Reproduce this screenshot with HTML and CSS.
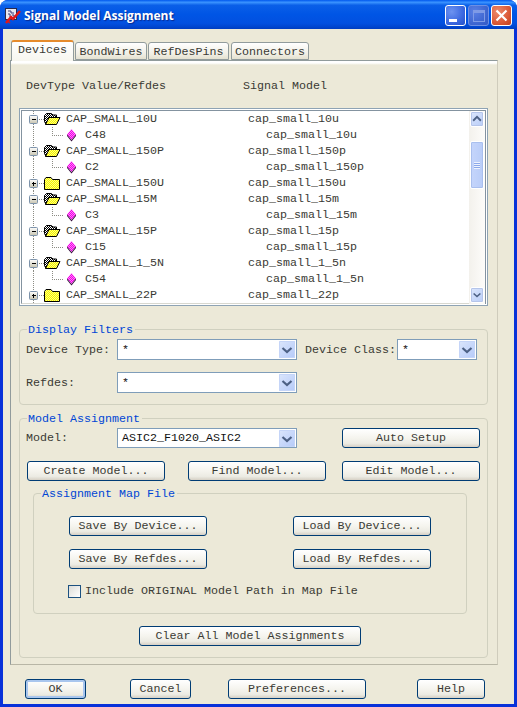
FILE: index.html
```html
<!DOCTYPE html>
<html lang="en">
<head>
<meta charset="utf-8">
<title>Signal Model Assignment</title>
<link rel="stylesheet" href="styles.css">
</head>
<body>
<svg class="defs" width="0" height="0" aria-hidden="true">
  <defs>
    <pattern id="black-dither" width="2" height="2" patternUnits="userSpaceOnUse">
      <rect width="2" height="2" fill="#fff"/><rect width="1" height="1" fill="#000"/><rect x="1" y="1" width="1" height="1" fill="#000"/>
    </pattern>
    <pattern id="yellow-dither" width="2" height="2" patternUnits="userSpaceOnUse">
      <rect width="2" height="2" fill="#ffff80"/><rect width="1" height="1" fill="#f4f400"/><rect x="1" y="1" width="1" height="1" fill="#f4f400"/>
    </pattern>
    <pattern id="pink-dither" width="2" height="2" patternUnits="userSpaceOnUse">
      <rect width="2" height="2" fill="#ff80ff"/><rect width="1" height="1" fill="#f000e0"/><rect x="1" y="1" width="1" height="1" fill="#f000e0"/>
    </pattern>
    <linearGradient id="exp-grad" x1="0" y1="0" x2="0" y2="1">
      <stop offset="0" stop-color="#fff"/><stop offset="1" stop-color="#c8c4b0"/>
    </linearGradient>
    <symbol id="i-open" viewBox="0 0 44 16">
      <path d="M11.500 0V4M11.500 13V16M17 8.500H22" stroke="#8c8c84" stroke-dasharray="1 1" fill="none" shape-rendering="crispEdges"/>
      <rect x="7.500" y="4.500" width="8" height="8" rx="1" fill="url(#exp-grad)" stroke="#7d93ab"/>
      <path d="M9.500 8.500h4" stroke="#000" shape-rendering="crispEdges"/>
      <path d="M22.500 10.500V4.500L24.500 2.500H29.500L31 4H34.500V6.500H28L24 13.500Z" fill="url(#black-dither)" stroke="#000"/>
      <path d="M23.500 13.500L27 6.500H38L34.500 13.500Z" fill="url(#yellow-dither)" stroke="#000"/>
    </symbol>
    <symbol id="i-closed" viewBox="0 0 44 16">
      <path d="M11.500 0V4M11.500 13V16M17 8.500H22" stroke="#8c8c84" stroke-dasharray="1 1" fill="none" shape-rendering="crispEdges"/>
      <rect x="7.500" y="4.500" width="8" height="8" rx="1" fill="url(#exp-grad)" stroke="#7d93ab"/>
      <path d="M9.500 8.500h4M11.500 6.500v4" stroke="#000" shape-rendering="crispEdges"/>
      <path d="M22.500 14.500V4.500L24 2.500H29L30.500 4.500H37.500V14.500Z" fill="url(#yellow-dither)" stroke="#000"/>
    </symbol>
    <symbol id="i-leaf" viewBox="0 0 63 16">
      <path d="M11.500 0V16M30.500 0V8.500H42" stroke="#8c8c84" stroke-dasharray="1 1" fill="none" shape-rendering="crispEdges"/>
      <path d="M49.500 2L54 7.500L49.500 13L45 7.500Z" fill="url(#pink-dither)"/>
      <path d="M45 7.500L49.500 13L54 7.500V9L49.500 14.500L45 9Z" fill="#3a1040"/>
    </symbol>
    <symbol id="i-chev-down" viewBox="0 0 16 18">
      <path d="M3.500 7L8 11L12.500 7" fill="none" stroke="#4d6185" stroke-width="2.200"/>
    </symbol>
    <symbol id="i-chev-up" viewBox="0 0 14 16">
      <path d="M2.500 10L7 5.500L11.500 10" fill="none" stroke="#4d6185" stroke-width="2.200"/>
    </symbol>
  </defs>
</svg>

<div class="window">
  <header class="titlebar">
    <svg class="app-icon" width="16" height="16" viewBox="0 0 16 16" aria-hidden="true">
      <rect x="0.500" y="0.500" width="11" height="11" fill="#e8e8f0" stroke="#2a2a4a"/>
      <path d="M3 3h3v2h3M3 6h2v3M7 7h2v2" stroke="#3a3a7a" fill="none"/>
      <path d="M1 15L6 9L8 11L15 3" stroke="#e01818" stroke-width="2.500" fill="none"/>
      <path d="M2 12L5 15" stroke="#e01818" stroke-width="1.500"/>
    </svg>
    <h1 class="title">Signal Model Assignment</h1>
    <div class="win-buttons">
      <div class="win-btn win-min"><span class="min-glyph"></span></div>
      <div class="win-btn win-max"><span class="max-glyph"></span></div>
      <div class="win-btn win-close">
        <svg width="13" height="13" viewBox="0 0 13 13" aria-hidden="true"><path d="M1.500 1.500L11.500 11.500M11.500 1.500L1.500 11.500" stroke="#fff" stroke-width="2.200"/></svg>
      </div>
    </div>
  </header>

  <div class="client">
    <nav class="tabs">
      <div class="tab tab-active tab-devices">Devices</div>
      <div class="tab tab-bond">BondWires</div>
      <div class="tab tab-refdes">RefDesPins</div>
      <div class="tab tab-conn">Connectors</div>
    </nav>

    <section class="panel">
      <div class="columns">
        <span class="col-devtype">DevType Value/Refdes</span>
        <span>Signal Model</span>
      </div>

      <div class="tree">
        <div class="tree-list">
          <div class="row"><svg class="ico"><use href="#i-open"/></svg><span class="name">CAP_SMALL_10U</span><span>cap_small_10u</span></div>
          <div class="row row-leaf"><svg class="ico-leaf"><use href="#i-leaf"/></svg><span class="name">C48</span><span>cap_small_10u</span></div>
          <div class="row"><svg class="ico"><use href="#i-open"/></svg><span class="name">CAP_SMALL_150P</span><span>cap_small_150p</span></div>
          <div class="row row-leaf"><svg class="ico-leaf"><use href="#i-leaf"/></svg><span class="name">C2</span><span>cap_small_150p</span></div>
          <div class="row"><svg class="ico"><use href="#i-closed"/></svg><span class="name">CAP_SMALL_150U</span><span>cap_small_150u</span></div>
          <div class="row"><svg class="ico"><use href="#i-open"/></svg><span class="name">CAP_SMALL_15M</span><span>cap_small_15m</span></div>
          <div class="row row-leaf"><svg class="ico-leaf"><use href="#i-leaf"/></svg><span class="name">C3</span><span>cap_small_15m</span></div>
          <div class="row"><svg class="ico"><use href="#i-open"/></svg><span class="name">CAP_SMALL_15P</span><span>cap_small_15p</span></div>
          <div class="row row-leaf"><svg class="ico-leaf"><use href="#i-leaf"/></svg><span class="name">C15</span><span>cap_small_15p</span></div>
          <div class="row"><svg class="ico"><use href="#i-open"/></svg><span class="name">CAP_SMALL_1_5N</span><span>cap_small_1_5n</span></div>
          <div class="row row-leaf"><svg class="ico-leaf"><use href="#i-leaf"/></svg><span class="name">C54</span><span>cap_small_1_5n</span></div>
          <div class="row"><svg class="ico"><use href="#i-closed"/></svg><span class="name">CAP_SMALL_22P</span><span>cap_small_22p</span></div>
        </div>
        <div class="scrollbar">
          <div class="sb-btn"><svg width="14" height="16"><use href="#i-chev-up"/></svg></div>
          <div class="sb-track">
            <div class="sb-thumb"><span class="grip"></span></div>
          </div>
          <div class="sb-btn"><svg width="14" height="16"><use href="#i-chev-down"/></svg></div>
        </div>
      </div>

      <section class="group group-filters">
        <div class="legend legend-outer">Display Filters</div>
        <div class="form-row">
          <label class="field-label">Device Type:</label>
          <div class="combo combo-wide"><span class="combo-value">*</span><span class="combo-btn"><svg width="16" height="18"><use href="#i-chev-down"/></svg></span></div>
          <label class="class-label">Device Class:</label>
          <div class="combo combo-narrow"><span class="combo-value">*</span><span class="combo-btn"><svg width="16" height="18"><use href="#i-chev-down"/></svg></span></div>
        </div>
        <div class="form-row">
          <label class="field-label">Refdes:</label>
          <div class="combo combo-wide"><span class="combo-value">*</span><span class="combo-btn"><svg width="16" height="18"><use href="#i-chev-down"/></svg></span></div>
        </div>
      </section>

      <section class="group group-model">
        <div class="legend legend-outer">Model Assignment</div>
        <div class="form-row model-row">
          <label class="field-label">Model:</label>
          <div class="combo combo-wide"><span class="combo-value">ASIC2_F1020_ASIC2</span><span class="combo-btn"><svg width="16" height="18"><use href="#i-chev-down"/></svg></span></div>
          <button class="btn btn-auto">Auto Setup</button>
        </div>
        <div class="button-row">
          <button class="btn">Create Model...</button>
          <button class="btn">Find Model...</button>
          <button class="btn">Edit Model...</button>
        </div>

        <section class="group group-map">
          <div class="legend legend-map">Assignment Map File</div>
          <div class="map-grid">
            <button class="btn">Save By Device...</button>
            <button class="btn">Load By Device...</button>
            <button class="btn">Save By Refdes...</button>
            <button class="btn">Load By Refdes...</button>
          </div>
          <label class="check-row"><span class="checkbox"></span><span>Include ORIGINAL Model Path in Map File</span></label>
        </section>

        <button class="btn btn-clear">Clear All Model Assignments</button>
      </section>
    </section>

    <footer class="footer">
      <button class="btn btn-ok">OK</button>
      <button class="btn btn-cancel">Cancel</button>
      <button class="btn btn-prefs">Preferences...</button>
      <button class="btn btn-help">Help</button>
    </footer>
  </div>
</div>
</body>
</html>
```

FILE: styles.css
```css
* { box-sizing: border-box; }
html, body { margin: 0; padding: 0; background: #fff; }
body {
  width: 517px;
  height: 707px;
  overflow: hidden;
  font-family: "Liberation Mono", "Courier New", monospace;
  font-size: 11.67px;
  line-height: 14px;
  color: #3a3a34;
}
.defs { position: absolute; }

.window {
  width: 517px;
  height: 707px;
  display: flex;
  flex-direction: column;
  background: #0831d9;
  border-radius: 8px 8px 0 0;
  overflow: hidden;
}

.titlebar {
  height: 29px;
  flex: none;
  display: flex;
  align-items: center;
  padding: 2px 5px 0 5px;
  background: linear-gradient(180deg, #0058ee 0%, #3a93ff 8%, #0a5fe8 18%, #0055e5 50%, #0250e0 80%, #0046d0 92%, #003dc0 100%);
}
.app-icon { flex: none; }
.title {
  margin: 0 0 0 3px;
  flex: 1;
  font-family: "Open Sans", "Liberation Sans", sans-serif;
  font-size: 12px;
  font-weight: 700;
  color: #fff;
  text-shadow: 1px 1px 1px #0a2a90;
}
.win-buttons { display: flex; gap: 2px; }
.win-btn {
  width: 21px;
  height: 21px;
  border: 1px solid #fff;
  border-radius: 3px;
  display: flex;
  align-items: center;
  justify-content: center;
}
.win-min { background: radial-gradient(circle at 30% 30%, #6d93f0 0%, #3c68e0 60%, #2350c8 100%); }
.win-max { background: radial-gradient(circle at 30% 30%, #5a80e4 0%, #3b63cf 70%, #3259c6 100%); border-color: #6d8fe4; }
.win-close { background: radial-gradient(circle at 30% 30%, #ec8a6c 0%, #db5a38 60%, #c23f1c 100%); }
.min-glyph { width: 8px; height: 3px; background: #fff; margin: 9px 5px 0 0; }
.max-glyph { width: 12px; height: 12px; border: 1px solid #7e9ae6; border-top-width: 3px; }

.client {
  flex: 1;
  margin: 0 3px 3px;
  padding: 11px 0 0 7px;
  background: #ece9d8;
  display: flex;
  flex-direction: column;
}

.tabs {
  display: flex;
  align-items: flex-end;
  padding-left: 1px;
  height: 21px;
  margin-bottom: -1px;
  position: relative;
  z-index: 1;
}
.tab {
  height: 18px;
  border: 1px solid #919b9c;
  border-radius: 3px 3px 0 0;
  background: linear-gradient(180deg, #fff, #f0eee4 70%, #e4e1d0);
  display: flex;
  align-items: center;
  justify-content: center;
  margin-bottom: 1px;
  padding-top: 1px;
}
.tab-active {
  height: 21px;
  margin-bottom: 0;
  border: 0;
  border-top: 2px solid #e68b2c;
  border-left: 1px solid #919b9c;
  border-right: 1px solid #919b9c;
  background: linear-gradient(180deg, #fff, #f7f6ef);
  padding: 0 0 4px;
}
.tab-devices { width: 63px; }
.tab-bond { width: 72px; margin-left: 1px; }
.tab-refdes { width: 81px; margin-left: 1px; }
.tab-conn { width: 78px; margin-left: 2px; }

.panel {
  width: 488px;
  height: 605px;
  border: 1px solid #919b9c;
  border-right-color: #cfccbc;
  border-bottom-color: #b8b6a6;
  background: linear-gradient(180deg, #fff 0, #fff 2px, #ece9d8 4px);
  padding: 17px 10px 8px 8px;
}

.columns {
  height: 16px;
  display: flex;
  align-items: center;
  padding-left: 7px;
  margin-bottom: 14px;
}
.col-devtype { width: 217px; }

.tree {
  width: 469px;
  height: 198px;
  background: #fff;
  border: 1px solid #8ea3b4;
  padding: 1px;
  display: flex;
}
.tree-list {
  flex: 1;
  background: #fff;
  border: 1px solid #8493a0;
  border-right: 0;
  border-bottom-color: #d8d8d0;
  min-width: 0;
}
.row {
  height: 16px;
  display: grid;
  grid-template-columns: 44px 182px 1fr;
  align-items: center;
  white-space: nowrap;
}
.row-leaf { grid-template-columns: 63px 181px 1fr; }
.ico { width: 44px; height: 16px; display: block; }
.ico-leaf { width: 63px; height: 16px; display: block; }

.scrollbar {
  width: 17px;
  flex: none;
  border-top: 1px solid #8493a0;
  border-right: 1px solid #8493a0;
  background: linear-gradient(90deg, #f3f1ec, #fdfcfa);
  display: flex;
  flex-direction: column;
  padding: 0 1px 1px 1px;
}
.sb-btn {
  height: 16px;
  flex: none;
  border: 1px solid #fff;
  border-radius: 2px;
  background: linear-gradient(135deg, #dbe6fc, #b9cdf8);
  box-shadow: 0 0 0 1px #b5c5ea inset;
  display: flex;
  align-items: center;
  justify-content: center;
}
.sb-track { flex: 1; padding-top: 14px; }
.sb-thumb {
  height: 48px;
  border: 1px solid #fff;
  border-radius: 2px;
  background: linear-gradient(90deg, #c5d5fb, #b8ccf8);
  box-shadow: 0 0 0 1px #a9bfee inset;
  display: flex;
  align-items: center;
  justify-content: center;
}
.grip {
  width: 6px;
  height: 7px;
  background: repeating-linear-gradient(180deg, #eef3fe 0, #eef3fe 1px, #8ba8ea 1px, #8ba8ea 2px);
}

.group {
  position: relative;
  border: 1px solid #d0d0bf;
  border-radius: 4px;
}
.legend {
  position: absolute;
  top: -7px;
  background: #ece9d8;
  color: #0046d5;
  padding: 0 2px 0 1px;
  white-space: nowrap;
}
.legend-outer { left: 7px; }
.legend-map { left: 7px; }

.group-filters {
  width: 469px;
  height: 76px;
  margin-top: 23px;
  padding: 9px 0 0 6px;
  display: flex;
  flex-direction: column;
  gap: 12px;
}
.group-model {
  width: 469px;
  height: 240px;
  margin-top: 13px;
  padding: 9px 0 0 6px;
}

.form-row { display: flex; align-items: center; height: 21px; }
.field-label { width: 91px; flex: none; }
.class-label { width: 92px; flex: none; margin-left: 8px; }

.combo {
  height: 21px;
  border: 1px solid #7f9db9;
  background: #fff;
  display: flex;
  align-items: center;
  justify-content: space-between;
  padding: 0 1px;
  flex: none;
}
.combo-wide { width: 180px; }
.combo-narrow { width: 80px; }
.combo-value { padding-left: 3px; color: #111; }
.combo-btn {
  width: 16px;
  height: 17px;
  display: block;
  border-radius: 1px;
  background: linear-gradient(135deg, #dbe6fc, #b5caf9);
  box-shadow: 0 0 0 1px #c5d5f8 inset;
}
.combo-btn svg { display: block; }

.model-row { height: 20px; }
.model-row .combo { height: 20px; }

.btn {
  width: 138px;
  height: 20px;
  padding: 0;
  font: inherit;
  color: inherit;
  border: 1px solid #003c74;
  border-radius: 3px;
  background: linear-gradient(180deg, #fff 0%, #f5f4ee 50%, #ecebe3 80%, #d6d0c5 100%);
  flex: none;
}
.btn-auto { margin-left: 45px; }

.button-row {
  display: flex;
  gap: 23px;
  margin: 13px 0 0 1px;
}
.button-row .btn:last-child { margin-left: -7px; }

.group-map {
  width: 434px;
  height: 121px;
  margin: 12px 0 0 7px;
  padding: 22px 0 0 35px;
}
.map-grid {
  display: grid;
  grid-template-columns: 138px 138px;
  column-gap: 86px;
  row-gap: 13px;
}
.check-row {
  display: flex;
  align-items: center;
  margin: 15px 0 0 -1px;
  height: 14px;
}
.checkbox {
  width: 13px;
  height: 13px;
  border: 1px solid #1c5180;
  background: linear-gradient(135deg, #dcdcd7, #fff);
  margin-right: 4px;
  flex: none;
}
.btn-clear {
  display: block;
  width: 222px;
  margin: 12px 0 0 113px;
}

.footer {
  display: flex;
  margin-top: 14px;
  padding-left: 15px;
}
.btn-ok { width: 61px; box-shadow: inset 0 0 0 2px #a9c6ee; }
.btn-cancel { width: 61px; margin-left: 44px; }
.btn-prefs { width: 138px; margin-left: 37px; }
.btn-help { width: 68px; margin-left: 51px; }
```
